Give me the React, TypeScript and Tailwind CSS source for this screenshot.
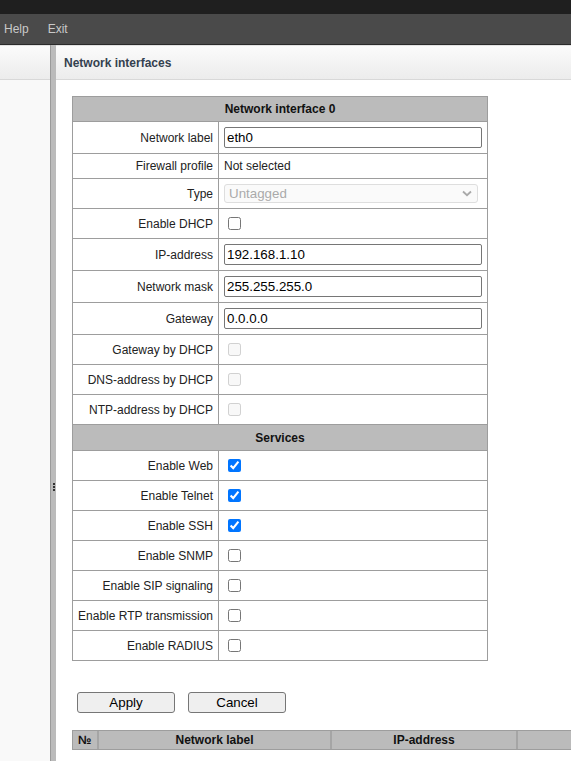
import React from "react";

type Row =
  | { kind: "header"; label: string; h: string }
  | { kind: "input"; label: string; h: string; value: string }
  | { kind: "text"; label: string; h: string; value: string }
  | { kind: "select"; label: string; h: string; value: string }
  | { kind: "checkbox"; label: string; h: string; checked: boolean; disabled?: boolean };

const rows: Row[] = [
  { kind: "header", label: "Network interface 0", h: "h-[25px]" },
  { kind: "input", label: "Network label", h: "h-[32px]", value: "eth0" },
  { kind: "text", label: "Firewall profile", h: "h-[25px]", value: "Not selected" },
  { kind: "select", label: "Type", h: "h-[30px]", value: "Untagged" },
  { kind: "checkbox", label: "Enable DHCP", h: "h-[30px]", checked: false },
  { kind: "input", label: "IP-address", h: "h-[32px]", value: "192.168.1.10" },
  { kind: "input", label: "Network mask", h: "h-[32px]", value: "255.255.255.0" },
  { kind: "input", label: "Gateway", h: "h-[32px]", value: "0.0.0.0" },
  { kind: "checkbox", label: "Gateway by DHCP", h: "h-[30px]", checked: false, disabled: true },
  { kind: "checkbox", label: "DNS-address by DHCP", h: "h-[30px]", checked: false, disabled: true },
  { kind: "checkbox", label: "NTP-address by DHCP", h: "h-[30px]", checked: false, disabled: true },
  { kind: "header", label: "Services", h: "h-[26px]" },
  { kind: "checkbox", label: "Enable Web", h: "h-[30px]", checked: true },
  { kind: "checkbox", label: "Enable Telnet", h: "h-[30px]", checked: true },
  { kind: "checkbox", label: "Enable SSH", h: "h-[30px]", checked: true },
  { kind: "checkbox", label: "Enable SNMP", h: "h-[30px]", checked: false },
  { kind: "checkbox", label: "Enable SIP signaling", h: "h-[30px]", checked: false },
  { kind: "checkbox", label: "Enable RTP transmission", h: "h-[30px]", checked: false },
  { kind: "checkbox", label: "Enable RADIUS", h: "h-[30px]", checked: false },
];

function Value({ row }: { row: Row }) {
  if (row.kind === "input") {
    return (
      <input
        type="text"
        defaultValue={row.value}
        className="w-full h-[21px] border border-[#767676] rounded-[2px] px-[2px] bg-white text-black text-[13.33px] outline-none"
      />
    );
  }
  if (row.kind === "text") {
    return <span className="text-[12px] text-[#222]">{row.value}</span>;
  }
  if (row.kind === "select") {
    return (
      <div className="w-[254px] h-[19px] flex items-center justify-between border border-[#dedede] rounded-[3px] bg-[#fafafa] pl-[4px] pr-[5px]">
        <span className="text-[13.33px] text-[#aaaaaa] leading-none">{row.value}</span>
        <svg width="10" height="7" viewBox="0 0 10 7" fill="none">
          <path d="M1 1.5 L5 5.2 L9 1.5" stroke="#a9a9a9" strokeWidth="1.8" />
        </svg>
      </div>
    );
  }
  if (row.kind === "checkbox") {
    return (
      <input
        type="checkbox"
        defaultChecked={row.checked}
        disabled={row.disabled}
        className="ml-[4px] w-[13px] h-[13px]"
      />
    );
  }
  return null;
}

export default function App() {
  return (
    <div
      className="w-full h-[761px] overflow-hidden flex flex-col bg-white text-[#222]"
      style={{ fontFamily: '"Liberation Sans", Arial, sans-serif' }}
    >
      <div className="h-[14px] bg-[#1f1f1f] shrink-0" />
      <div className="h-[31px] shrink-0 bg-[#4a4a4a] border-b border-[#2a2a2a] flex items-center gap-[19px] pl-[4px] text-[12px] text-[#c9c9c9]">
        <span>Help</span>
        <span>Exit</span>
      </div>
      <div className="flex flex-1 min-h-0">
        <div className="w-[50px] shrink-0 flex flex-col bg-[#f9f9f9]">
          <div className="h-[35px] shrink-0 border-t border-t-[#e2e2e2] bg-gradient-to-b from-[#fbfbfb] to-[#ececec] border-b border-b-[#d8d8d8]" />
          <div className="flex-1" />
        </div>
        <div className="w-[6px] shrink-0 bg-[#bbbbbb] border-l border-[#9a9a9a] flex flex-col items-center pt-[438px]">
          <div className="flex flex-col gap-[1px]">
            <div className="w-[2px] h-[2px] bg-[#333]" />
            <div className="w-[2px] h-[2px] bg-[#333]" />
            <div className="w-[2px] h-[2px] bg-[#333]" />
          </div>
        </div>
        <div className="flex-1 min-w-0 flex flex-col overflow-hidden">
          <div className="h-[35px] shrink-0 border-t border-t-[#e2e2e2] bg-gradient-to-b from-[#fbfbfb] to-[#ececec] border-b border-b-[#d8d8d8] flex items-center pl-[8px]">
            <span className="text-[12px] font-bold text-[#34414f]">Network interfaces</span>
          </div>
          <div className="pt-[16px] pl-[16px]">
            <div className="w-[416px] border-l border-r border-t border-[#9d9d9d]">
              {rows.map((row, i) =>
                row.kind === "header" ? (
                  <div
                    key={i}
                    className={`${row.h} border-b border-[#9d9d9d] bg-[#bbbbbb] flex items-center justify-center text-[12px] font-bold text-[#111]`}
                  >
                    {row.label}
                  </div>
                ) : (
                  <div key={i} className={`${row.h} border-b border-[#9d9d9d] flex`}>
                    <div className="w-[146px] shrink-0 border-r border-[#9d9d9d] flex items-center justify-end pr-[5px] text-[12px] text-[#222] whitespace-nowrap">
                      {row.label}
                    </div>
                    <div className="flex-1 flex items-center px-[5px]">
                      <Value row={row} />
                    </div>
                  </div>
                )
              )}
            </div>
            <div className="flex gap-[13px] mt-[31px] ml-[5px]">
              <button className="w-[98px] h-[21px] bg-[#efefef] border border-[#767676] rounded-[3px] text-[13.33px] text-black leading-none pt-[1px]">
                Apply
              </button>
              <button className="w-[98px] h-[21px] bg-[#efefef] border border-[#767676] rounded-[3px] text-[13.33px] text-black leading-none pt-[1px]">
                Cancel
              </button>
            </div>
            <div className="mt-[17px] w-[620px] h-[20px] flex bg-[#bbbbbb] border border-[#9d9d9d] text-[12px] font-bold text-[#111]">
              <div className="w-[26px] shrink-0 border-r-2 border-[#a5a5a5] flex items-center pl-[5px]">№</div>
              <div className="w-[233px] shrink-0 border-r-2 border-[#a5a5a5] flex items-center justify-center">Network label</div>
              <div className="w-[186px] shrink-0 border-r-2 border-[#a5a5a5] flex items-center justify-center">IP-address</div>
              <div className="flex-1" />
            </div>
          </div>
        </div>
      </div>
    </div>
  );
}
